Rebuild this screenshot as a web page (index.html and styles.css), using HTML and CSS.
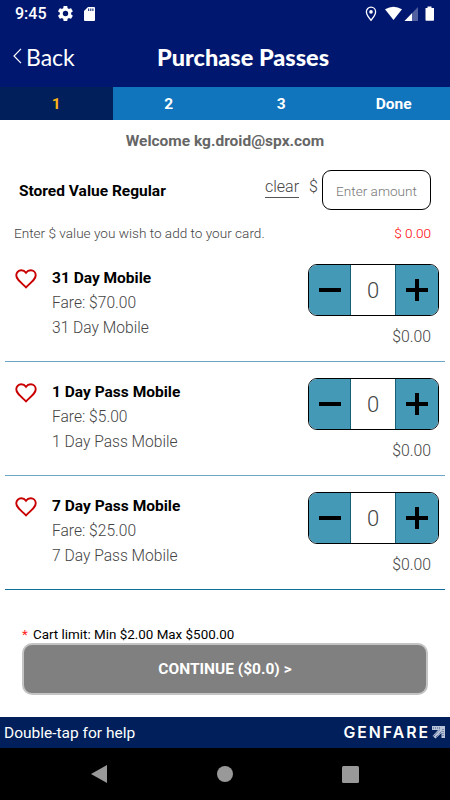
FILE: index.html
```html
<!DOCTYPE html>
<html lang="en">
<head>
<meta charset="utf-8">
<title>Purchase Passes</title>
<link rel="stylesheet" href="styles.css">
</head>
<body>
<svg width="0" height="0" class="defs">
  <symbol id="heart" viewBox="0 0 24 22"><path d="M12 20.2 10.3 18.6C4.6 13.4 1.3 10.7 1.3 6.9 1.3 3.8 3.8 1.4 6.8 1.4c2 0 4 1 5.2 2.7 1.2-1.7 3.2-2.7 5.2-2.7 3 0 5.5 2.4 5.5 5.5 0 3.8-3.3 6.5-9 11.7Z" fill="none" stroke="#c90000" stroke-width="2.1"/></symbol>
</svg>
<div class="screen">
  <header class="header">
    <div class="status">
      <span class="time">9:45</span>
      <svg class="gear" width="16" height="16" viewBox="2 2 20 20"><path fill="#fff" d="M19.4 13c0-.3.1-.6.1-1s0-.7-.1-1l2.100-1.600c.2-.2.3-.4.1-.6l-2-3.500c-.1-.2-.3-.3-.6-.2l-2.500 1c-.5-.4-1.100-.7-1.700-1L14.400 2.400c0-.2-.2-.4-.5-.4h-4c-.2 0-.5.2-.5.4L9 5.100c-.6.200-1.200.6-1.700 1l-2.500-1c-.2-.1-.5 0-.6.2l-2 3.500c-.1.200-.1.500.1.6L4.500 11c0 .3-.1.700-.1 1s0 .7.1 1l-2.200 1.600c-.2.200-.2.400-.1.600l2 3.500c.1.200.4.300.6.200l2.500-1c.5.400 1.100.7 1.700 1l.4 2.700c0 .2.200.4.500.4h4c.2 0 .5-.2.500-.4l.4-2.700c.6-.2 1.100-.6 1.700-1l2.500 1c.2.100.5 0 .6-.2l2-3.500c.1-.2.100-.4-.1-.6ZM12 15.600a3.600 3.600 0 1 1 0-7.200 3.600 3.600 0 0 1 0 7.200Z"/></svg>
      <svg class="sd" width="11" height="14" viewBox="0 0 11 14"><path fill="#fff" d="M4 0h6q1 0 1 1v12q0 1-1 1H1q-1 0-1-1V4Z"/><path d="M4.700 1.500v2.500M6.800 1.500v2.500M8.900 1.500v2.500" stroke="#001770" stroke-width="1"/></svg>
      <svg class="signals" width="70" height="16" viewBox="0 0 70 16">
        <path d="M7 1.200a4.600 4.600 0 0 0-4.600 4.600c0 3.300 4.600 8.400 4.600 8.400s4.600-5.100 4.600-8.400A4.600 4.600 0 0 0 7 1.200Z" fill="none" stroke="#fff" stroke-width="1.300"/><circle cx="7" cy="5.900" r="1.800" fill="#fff"/>
        <path d="M21 3.200Q29.500-1.800 38 3.200L29.500 14Z" fill="#fff"/>
        <path d="M54 1v14H40.500Z" fill="#5360a0"/><path d="M48 7.200v7.800h-7.500Z" fill="#fff"/>
        <path d="M63.500.5h4v1.500H70V14q0 .8-.8.8h-6.900q-.8 0-.8-.8V2h2Z" fill="#fff"/>
      </svg>
    </div>
    <div class="titlebar">
      <a class="back"><svg width="9" height="16" viewBox="0 0 9 16"><path d="M8 .8 1 8l7 7.200" fill="none" stroke="#fff" stroke-width="1.200"/></svg><span>Back</span></a>
      <h1 class="title">Purchase Passes</h1>
    </div>
  </header>
  <nav class="steps"><span class="step active">1</span><span class="step">2</span><span class="step">3</span><span class="step">Done</span></nav>
  <main class="content">
    <p class="welcome">Welcome kg.droid@spx.com</p>
    <section class="stored">
      <h2 class="stored-name">Stored Value Regular</h2>
      <a class="clear">clear</a><span class="dollar">$</span>
      <div class="amount">Enter amount</div>
    </section>
    <div class="hint"><span>Enter $ value you wish to add to your card.</span><span class="hint-total">$ 0.00</span></div>
    <section class="pass">
      <svg class="heart"><use href="#heart"/></svg>
      <div class="info"><h3 class="name">31 Day Mobile</h3><p>Fare: $70.00</p><p>31 Day Mobile</p></div>
      <div class="buy"><div class="stepper"><span class="btn minus"></span><span class="count">0</span><span class="btn plus"></span></div><p class="sum">$0.00</p></div>
    </section>
    <section class="pass">
      <svg class="heart"><use href="#heart"/></svg>
      <div class="info"><h3 class="name">1 Day Pass Mobile</h3><p>Fare: $5.00</p><p>1 Day Pass Mobile</p></div>
      <div class="buy"><div class="stepper"><span class="btn minus"></span><span class="count">0</span><span class="btn plus"></span></div><p class="sum">$0.00</p></div>
    </section>
    <section class="pass last">
      <svg class="heart"><use href="#heart"/></svg>
      <div class="info"><h3 class="name">7 Day Pass Mobile</h3><p>Fare: $25.00</p><p>7 Day Pass Mobile</p></div>
      <div class="buy"><div class="stepper"><span class="btn minus"></span><span class="count">0</span><span class="btn plus"></span></div><p class="sum">$0.00</p></div>
    </section>
    <p class="limit"><span class="star">*</span>Cart limit: Min $2.00 Max $500.00</p>
    <div class="continue">CONTINUE ($0.0) &gt;</div>
  </main>
  <footer class="help"><span>Double-tap for help</span><span class="brand">GENFARE</span>
    <svg class="brand-mark" width="13" height="13" viewBox="0 0 13 13"><path d="M0 0h13v12H9.500V7L3.500 12.500.5 10 6 4H0Z" fill="#b9c4d9"/><path d="M1 2h8M2 9.500l6-6M4 11l6-6M11 3v8M1 11l3-3" stroke="#001f5b" stroke-width=".7" stroke-dasharray="1 1"/></svg>
  </footer>
  <div class="navbar">
    <svg width="16" height="18" viewBox="0 0 16 18"><path d="M0 9 16 0v18Z" fill="#999"/></svg>
    <svg width="16" height="16" viewBox="0 0 16 16"><circle cx="8" cy="8" r="8" fill="#999"/></svg>
    <svg width="17" height="17" viewBox="0 0 17 17"><rect width="17" height="17" rx="1.500" fill="#999"/></svg>
  </div>
</div>
</body>
</html>
```
FILE: styles.css
```css
* { box-sizing: border-box; }
body, h1, h2, h3, p { margin: 0; }
body { font-family: Roboto, sans-serif; background: #fff; color: #444; }
svg { display: block; flex: none; }
.defs { position: absolute; }
.screen { width: 450px; height: 800px; display: flex; flex-direction: column; overflow: hidden; white-space: nowrap; }
.header { height: 87px; background: #001770; color: #fff; }
.status { height: 27px; display: flex; align-items: center; padding: 0 16px 0 15px; }
.time { font-size: 16px; font-weight: 500; width: 43px; line-height: 28px; }
.gear { width: 15px; height: 15px; }
.sd { margin-left: 11px; }
.signals { margin-left: auto; }
.titlebar { height: 60px; display: grid; grid-template-columns: 157px 1fr; align-items: center; font-family: Lato, sans-serif; }
.back { display: flex; align-items: center; gap: 4px; padding-left: 13px; font-size: 23px; line-height: 28px; }
.back svg { margin-top: -2px; }
.title { font-size: 23.500px; font-weight: 900; line-height: 28px; padding-bottom: 1px; }
.steps { height: 33px; display: grid; grid-template-columns: repeat(4, 1fr); background: #1075bd; color: #fff; font-size: 15.500px; font-weight: 700; line-height: 35px; text-align: center; }
.step { height: 33px; }
.active { background: #001f5b; color: #fdb515; }
.content { height: 597px; }
.welcome { font-size: 15.500px; font-weight: 700; line-height: 18px; padding-top: 12px; height: 50px; text-align: center; color: #666; }
.stored { display: flex; height: 40px; padding: 0 19px; align-items: flex-start; }
.stored-name { font-size: 15.500px; font-weight: 700; line-height: 42px; color: #000; width: 245px; }
.clear { font-size: 16px; font-weight: 300; line-height: 20px; margin: 7px 0 0 1px; border-bottom: 1px solid #555; }
.dollar { font-size: 16px; font-weight: 300; line-height: 20px; margin: 7px 0 0 10px; }
.amount { width: 109px; height: 40px; margin-left: auto; border: 1px solid #000; border-radius: 9px; text-align: center; font-size: 13.600px; font-weight: 300; line-height: 40px; color: #777; }
.hint { display: flex; justify-content: space-between; padding: 14px 19px 0 14px; height: 38px; font-size: 13.600px; font-weight: 300; line-height: 19px; }
.hint-total { color: #f00; }
.pass { height: 114px; margin: 0 5px; padding: 17px 6px 0 10px; display: flex; border-bottom: 1px solid #6ba5c2; }
.last { border-color: #0f6f9a; }
.heart { width: 22px; height: 20px; margin-top: 4px; }
.info { margin-left: 15px; font-size: 15.600px; font-weight: 300; line-height: 25.400px; padding-top: .6px; }
.name { font-size: 15.500px; font-weight: 700; color: #000; }
.buy { margin-left: auto; margin-top: -1px; }
.stepper { width: 131px; height: 52px; display: grid; grid-template-columns: 42px 1fr 43px; border: 1px solid #000; border-radius: 9px; overflow: hidden; }
.btn { background: linear-gradient(#000, #000) 10px 23px / 22px 4px no-repeat, #4499b7; }
.minus { border-right: 1px solid #155f77; }
.plus { border-left: 1px solid #155f77; background: linear-gradient(#000, #000) 10px 23px / 22px 4px no-repeat, linear-gradient(#000, #000) 19px 14px / 4px 22px no-repeat, #4499b7; }
.count { font-size: 22px; font-weight: 300; line-height: 52px; text-align: center; }
.sum { font-size: 15.800px; font-weight: 300; line-height: 20px; margin-top: 11px; padding-right: 8px; text-align: right; }
.limit { display: flex; padding: 36px 0 0 22px; height: 53px; font-size: 13.400px; line-height: 18px; color: #000; }
.star { width: 11px; color: #f22; }
.continue { width: 406px; height: 52px; margin-left: 22px; border: 2px solid #c4c4c4; border-radius: 10px; background: #808080; color: #fff; font-size: 15.500px; font-weight: 700; line-height: 49px; text-align: center; }
.help { height: 31px; display: flex; align-items: center; background: #001f5b; color: #fff; padding: 0 5px 0 4px; font-size: 15.500px; line-height: 32px; }
.brand { margin-left: auto; font-family: Inter, sans-serif; font-size: 15.800px; font-weight: 600; letter-spacing: 2px; }
.brand-mark { margin-left: 2px; }
.navbar { height: 52px; background: #000; display: flex; align-items: center; gap: 109.500px; padding: 0 0 0 91px; }
```
